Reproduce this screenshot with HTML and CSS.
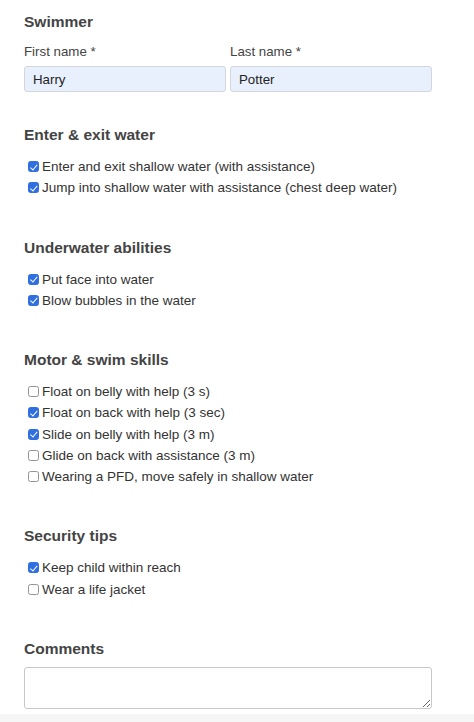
FILE: index.html
```html
<!DOCTYPE html>
<html lang="en">
<head>
<meta charset="utf-8">
<title>Swimmer evaluation</title>
<link rel="stylesheet" href="styles.css">
</head>
<body>
<form class="form">
  <section class="section section-first">
    <h2 class="title">Swimmer</h2>
    <div class="name-row">
      <div class="field">
        <label class="field-label" for="first">First name *</label>
        <input class="text-input" id="first" type="text" value="Harry">
      </div>
      <div class="field">
        <label class="field-label" for="last">Last name *</label>
        <input class="text-input" id="last" type="text" value="Potter">
      </div>
    </div>
  </section>

  <section class="section">
    <h2 class="title">Enter &amp; exit water</h2>
    <label class="check"><input class="box" type="checkbox" checked><span>Enter and exit shallow water (with assistance)</span></label>
    <label class="check"><input class="box" type="checkbox" checked><span>Jump into shallow water with assistance (chest deep water)</span></label>
  </section>

  <section class="section">
    <h2 class="title">Underwater abilities</h2>
    <label class="check"><input class="box" type="checkbox" checked><span>Put face into water</span></label>
    <label class="check"><input class="box" type="checkbox" checked><span>Blow bubbles in the water</span></label>
  </section>

  <section class="section">
    <h2 class="title">Motor &amp; swim skills</h2>
    <label class="check"><input class="box" type="checkbox"><span>Float on belly with help (3 s)</span></label>
    <label class="check"><input class="box" type="checkbox" checked><span>Float on back with help (3 sec)</span></label>
    <label class="check"><input class="box" type="checkbox" checked><span>Slide on belly with help (3 m)</span></label>
    <label class="check"><input class="box" type="checkbox"><span>Glide on back with assistance (3 m)</span></label>
    <label class="check"><input class="box" type="checkbox"><span>Wearing a PFD, move safely in shallow water</span></label>
  </section>

  <section class="section">
    <h2 class="title">Security tips</h2>
    <label class="check"><input class="box" type="checkbox" checked><span>Keep child within reach</span></label>
    <label class="check"><input class="box" type="checkbox"><span>Wear a life jacket</span></label>
  </section>

  <section class="section">
    <h2 class="title title-comments">Comments</h2>
    <textarea class="comments"></textarea>
  </section>
</form>
<div class="footer-strip"></div>
</body>
</html>
```

FILE: styles.css
```css
html, body {
  margin: 0;
  padding: 0;
  background: #ffffff;
}

body {
  font-family: "Liberation Sans", Arial, sans-serif;
  color: #333333;
  font-size: 13.5px;
  height: 722px;
  overflow: hidden;
  display: flex;
  flex-direction: column;
}

.form {
  width: 408px;
  padding: 12px 0 0 24px;
  display: flex;
  flex-direction: column;
}

.section {
  display: flex;
  flex-direction: column;
  margin-top: 39px;
}

.section-first {
  margin-top: 0;
}

.title {
  margin: 0 0 11px 0;
  font-size: 15.5px;
  line-height: 20px;
  font-weight: bold;
  color: #444444;
}

.section-first .title {
  margin-bottom: 12px;
}

.name-row {
  display: flex;
  gap: 4px;
}

.field {
  flex: 1;
  display: flex;
  flex-direction: column;
}

.field-label {
  font-size: 13.3px;
  line-height: 16px;
  color: #444444;
  margin-bottom: 6px;
}

.text-input {
  box-sizing: border-box;
  height: 26px;
  margin: 0;
  padding: 0 8px;
  border: 1px solid #d3d6db;
  border-radius: 3px;
  background: #e8f0fe;
  font-family: "Liberation Sans", Arial, sans-serif;
  font-size: 13.3px;
  color: #222222;
  outline: none;
}

.section-first + .section {
  margin-top: 33px;
}

.check {
  display: flex;
  align-items: center;
  height: 21.25px;
  font-size: 13.5px;
  color: #333333;
  padding-left: 4px;
}

.box {
  appearance: none;
  -webkit-appearance: none;
  box-sizing: border-box;
  width: 11px;
  height: 11px;
  margin: 0 3px 0 0;
  border: 1px solid #939393;
  border-radius: 2.5px;
  background: #ffffff;
  position: relative;
  flex: none;
}

.box:checked {
  background: #2f6fdf;
  border-color: #2f6fdf;
}

.box:checked::after {
  content: "";
  position: absolute;
  left: 3px;
  top: 0.5px;
  width: 2.5px;
  height: 5.5px;
  border-right: 1.6px solid #ffffff;
  border-bottom: 1.6px solid #ffffff;
  transform: rotate(40deg);
}

.title-comments {
  margin-bottom: 8px;
}

.comments {
  box-sizing: border-box;
  width: 408px;
  height: 42px;
  margin: 0;
  border: 1px solid #c8c8c8;
  border-radius: 3px;
  background: #ffffff;
  resize: vertical;
  font-family: "Liberation Sans", Arial, sans-serif;
}

.footer-strip {
  margin-top: 5px;
  width: 474px;
  flex: 1;
  background: #f6f6f6;
}
```
